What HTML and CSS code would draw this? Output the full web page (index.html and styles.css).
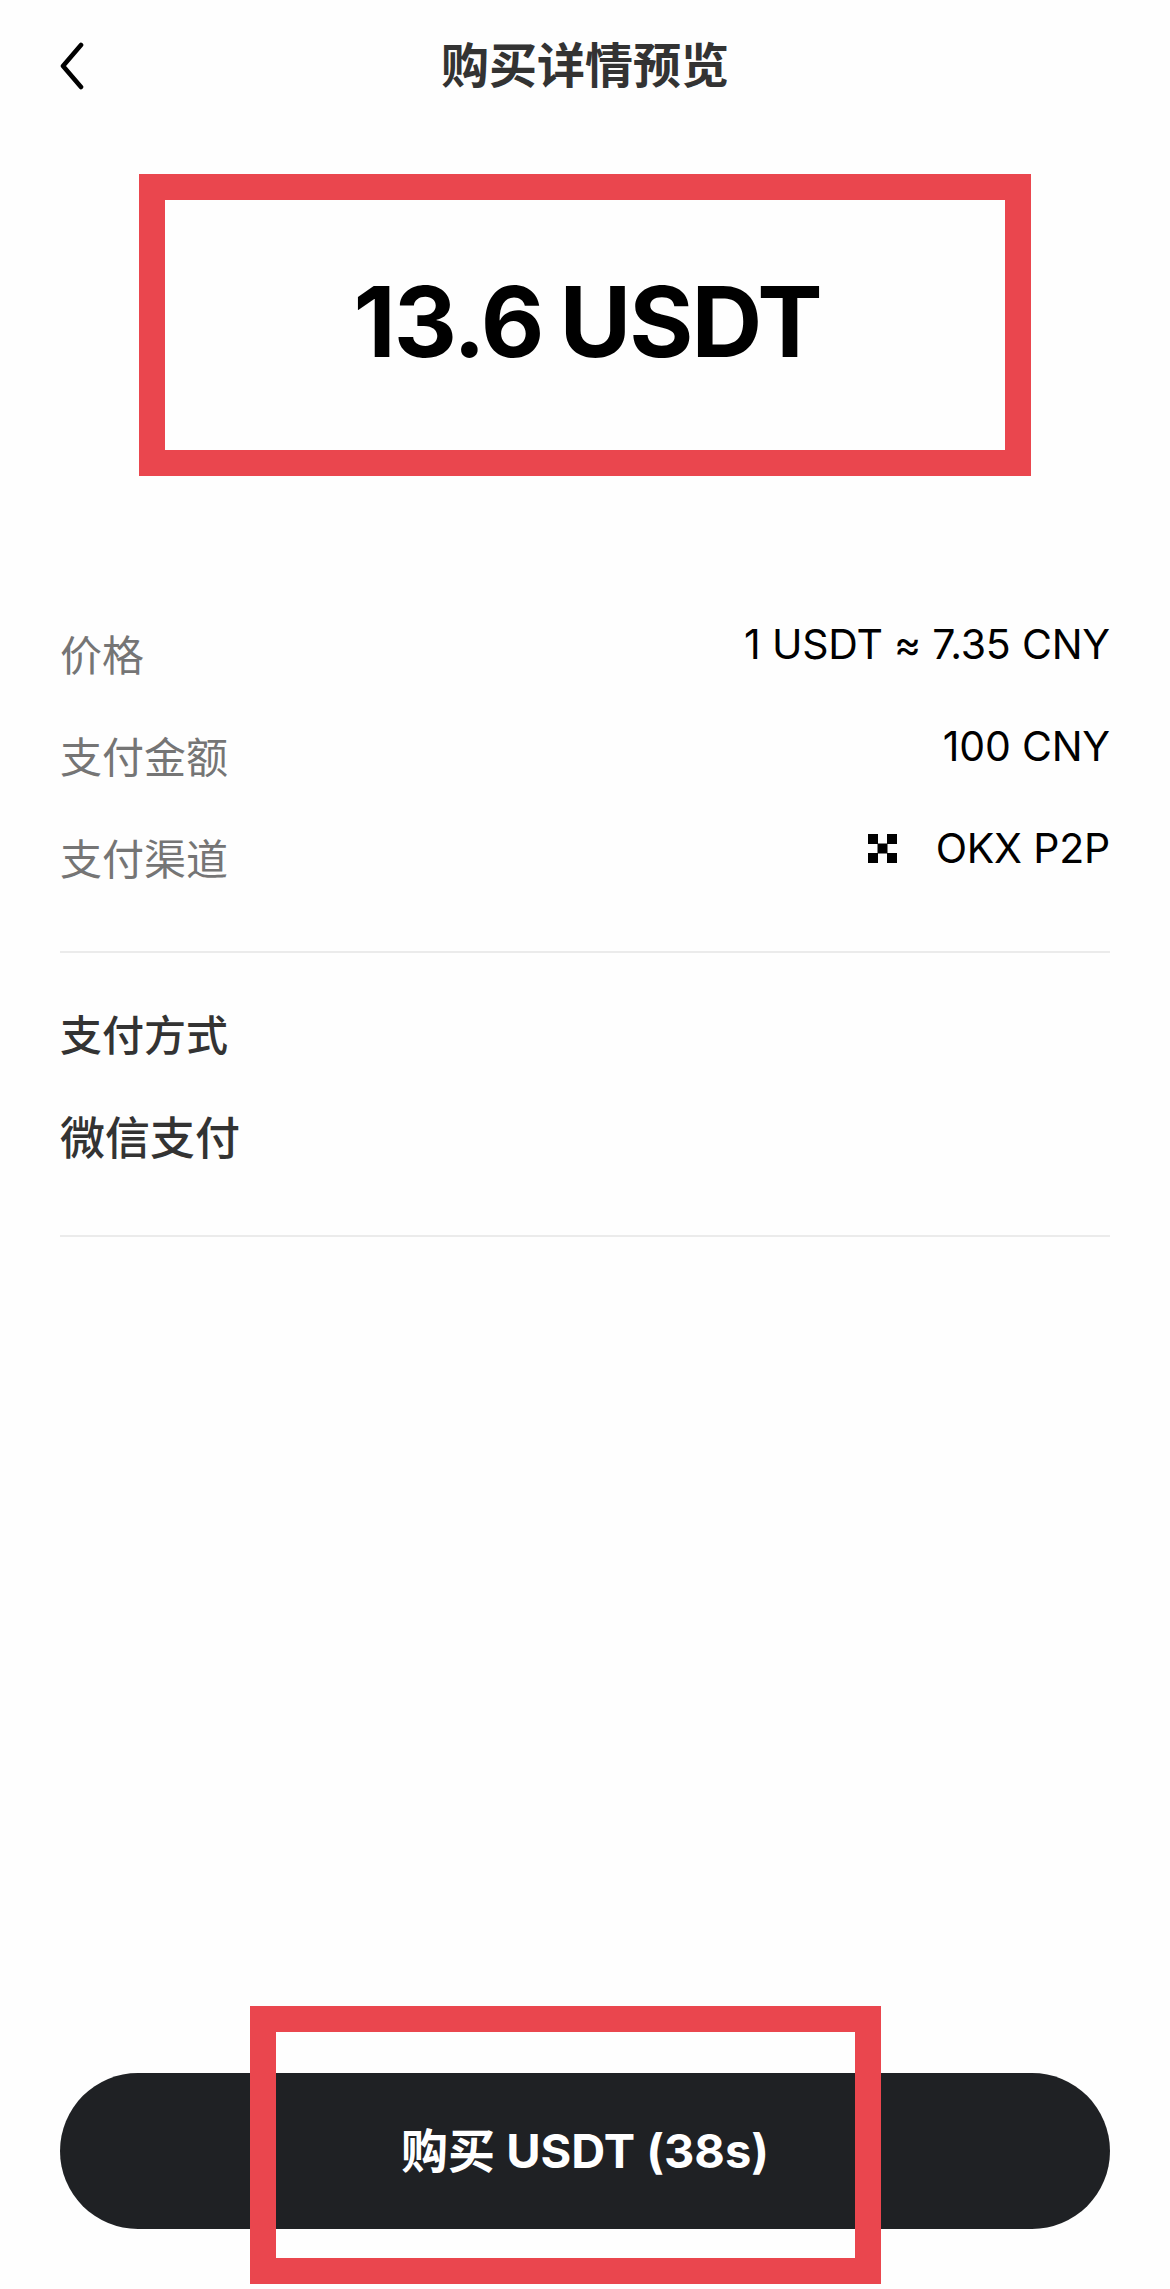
FILE: index.html
```html
<!DOCTYPE html>
<html lang="zh">
	<head>
		<meta charset="utf-8">
		<title>购买详情预览</title>
		<link rel="stylesheet" href="styles.css">
	</head>
	<body>
		<div class="page">
			<div class="header">
				<svg class="back" width="24" height="48" viewBox="0 0 24 48">
					<path d="M21 3 L3 24 L21 45" fill="none" stroke="#000" stroke-width="4.6" stroke-linecap="round" stroke-linejoin="round"/>
				</svg>
				<h1 class="title">购买详情预览</h1>
			</div>

			<div class="amount-box">
				<span class="amount">13.6 USDT</span>
			</div>

			<div class="rows">
				<div class="row">
					<span class="label">价格</span>
					<span class="value">1 USDT ≈ 7.35 CNY</span>
				</div>
				<div class="row">
					<span class="label">支付金额</span>
					<span class="value">100 CNY</span>
				</div>
				<div class="row">
					<span class="label">支付渠道</span>
					<span class="value channel">
						<svg width="29" height="29" viewBox="0 0 29 29">
							<rect x="0" y="0" width="10" height="10"/>
							<rect x="19" y="0" width="10" height="10"/>
							<rect x="9.5" y="9.5" width="10" height="10"/>
							<rect x="0" y="19" width="10" height="10"/>
							<rect x="19" y="19" width="10" height="10"/>
						</svg>
						OKX P2P
					</span>
				</div>
			</div>

			<div class="method">
				<div class="method-title">支付方式</div>
				<div class="method-name">微信支付</div>
			</div>

			<div class="footer">
				<button class="buy">
					购买 USDT (38s)
					<span class="buy-frame"></span>
				</button>
			</div>
		</div>
	</body>
</html>
```

FILE: styles.css
```css
* {
	box-sizing: border-box;
}

body {
	margin: 0;
	background: #fefefe;
	font-family: Inter, "Noto Sans CJK SC", sans-serif;
}

.page {
	display: flex;
	flex-direction: column;
	height: 2289px;
	padding: 0 60px;
}

.header {
	display: flex;
	align-items: center;
	justify-content: center;
	height: 132px;
	padding-bottom: 8px;
	margin-bottom: 42px;
	position: relative;
}

.back {
	position: absolute;
	left: 0;
	top: 42px;
}

.title {
	margin: 0;
	font-size: 48px;
	font-weight: 700;
	color: #333;
}

.amount-box {
	display: flex;
	align-items: center;
	justify-content: center;
	width: 892px;
	height: 302px;
	margin: 0 0 0 79px;
	padding: 0 0 8px 4px;
	border: 26px solid #ea464e;
}

.amount {
	font-size: 98px;
	font-weight: 700;
	letter-spacing: -2px;
	word-spacing: -4px;
	color: #000;
}

.rows {
	margin-top: 129px;
	padding-bottom: 40px;
	border-bottom: 2px solid #ebebeb;
}

.row {
	display: flex;
	justify-content: space-between;
	align-items: flex-start;
	height: 102px;
}

.label {
	margin-top: 21px;
	font-size: 42px;
	line-height: 60px;
	color: #757575;
}

.value {
	margin-top: 9px;
	font-size: 41px;
	line-height: 60px;
	letter-spacing: -0.2px;
	color: #000;
}

.channel {
	display: flex;
	align-items: center;
	gap: 39px;
}

.method {
	height: 284px;
	padding-top: 53px;
	border-bottom: 2px solid #ebebeb;
}

.method-title {
	font-size: 42px;
	font-weight: 500;
	line-height: 60px;
	color: #333;
}

.method-name {
	margin-top: 43px;
	font-size: 45px;
	font-weight: 500;
	line-height: 60px;
	color: #333;
}

.footer {
	margin-top: auto;
	padding-bottom: 60px;
}

.buy {
	display: block;
	position: relative;
	width: 100%;
	height: 156px;
	padding: 0 0 8px;
	border: 0;
	border-radius: 78px;
	background: #1f2124;
	color: #fff;
	font-family: inherit;
	font-size: 47px;
	font-weight: 700;
}

.buy-frame {
	position: absolute;
	left: 190px;
	top: -67px;
	width: 631px;
	height: 278px;
	border: 26px solid #ea464e;
}
```
